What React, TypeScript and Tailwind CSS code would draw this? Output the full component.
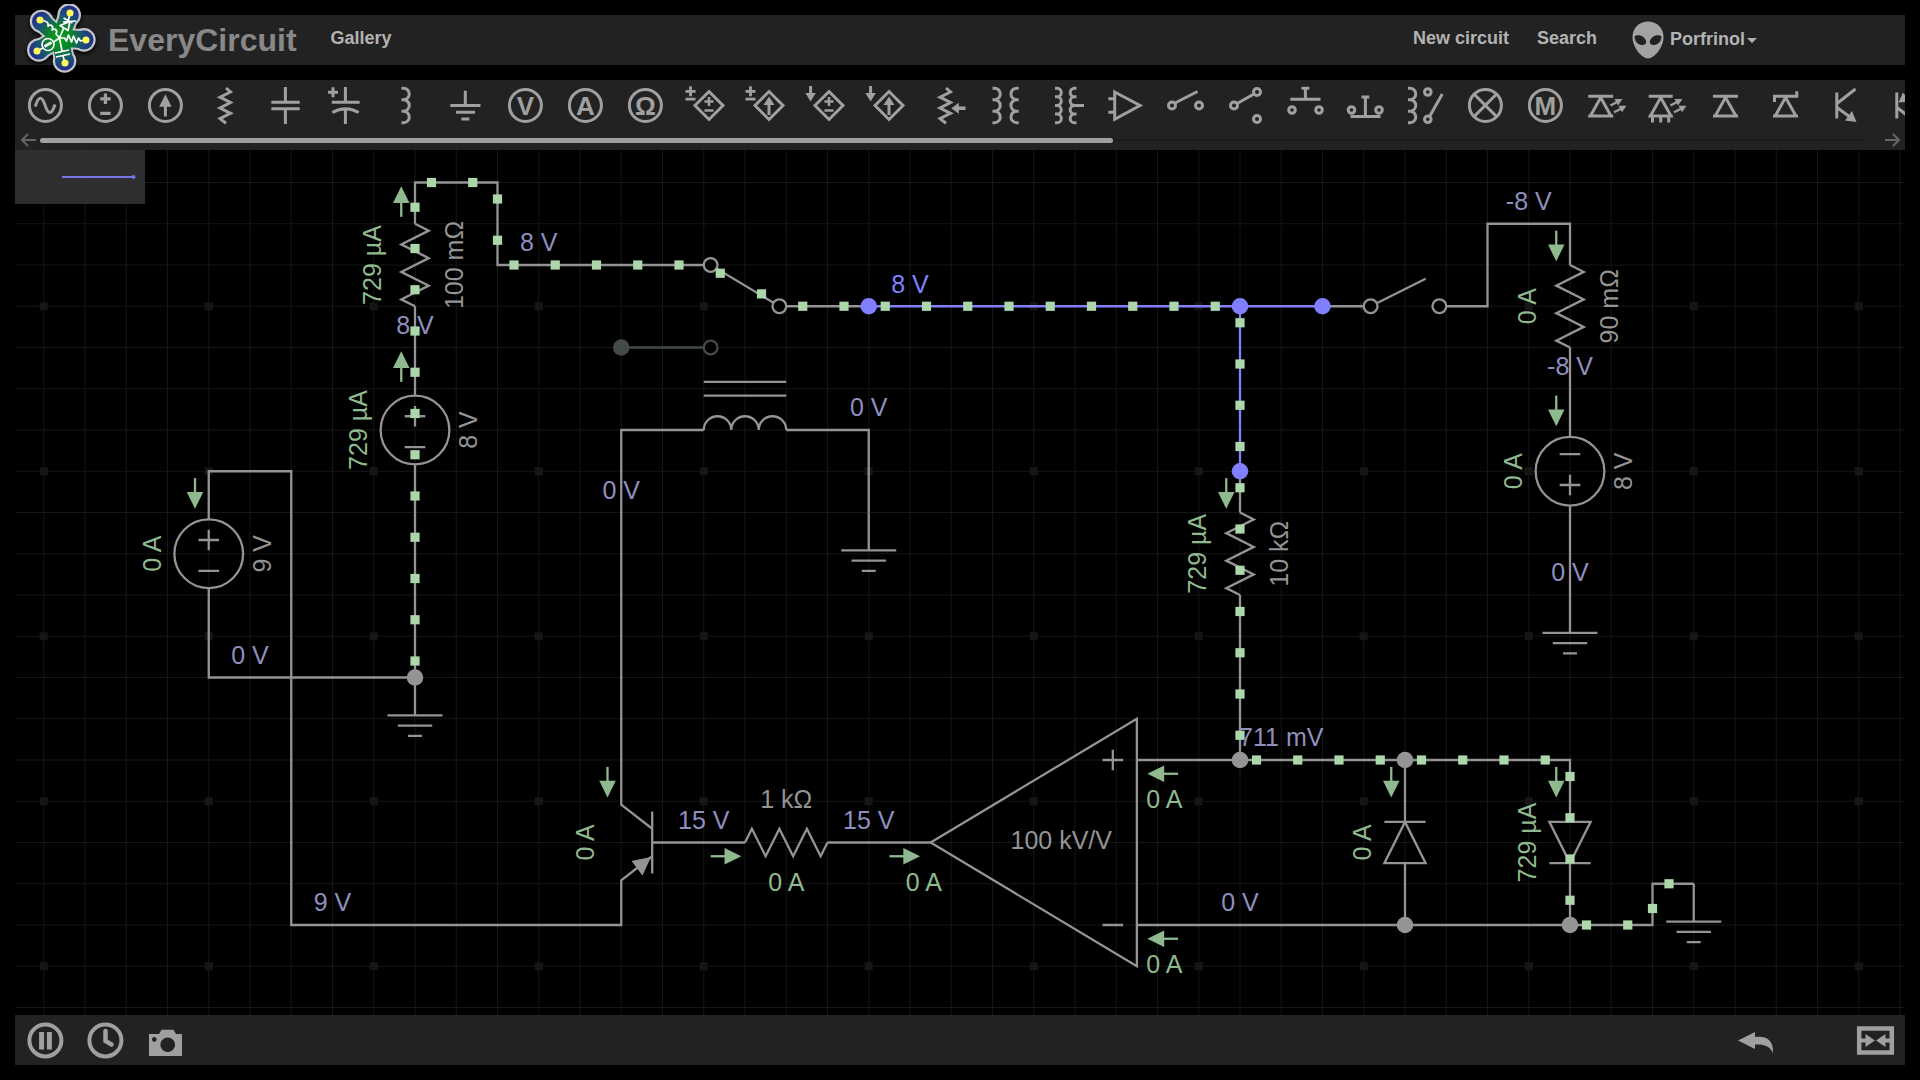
import React from "react";
import type { ReactNode } from "react";

/* ---------- Schematic canvas ---------- */

const U = 41.25; // grid pitch
const X = (i: number) => 28.75 + U * i;
const Y = (j: number) => 32.5 + U * j;
const T = 1 / 3;
const S = 1 / 6;

const GRAY = "#949494";
const GREEN = "#8fb98f";
const VOLT = "#8f8fbf";
const BLUE = "#8080ff";
const DIM = "#434a4a";
const LINE = 2.3;

type Pt = [number, number];

const range = (n: number, from = 0) => Array.from({ length: n }, (_, k) => from + k);

function Wire({ pts, color = GRAY }: { pts: Pt[]; color?: string }) {
  return (
    <polyline
      points={pts.map(([i, j]) => `${X(i)},${Y(j)}`).join(" ")}
      fill="none"
      stroke={color}
      strokeWidth={LINE}
    />
  );
}

function Dot({ i, j, color = GRAY }: { i: number; j: number; color?: string }) {
  return <circle cx={X(i)} cy={Y(j)} r={8.3} fill={color} />;
}

function Terminal({ i, j, color = GRAY }: { i: number; j: number; color?: string }) {
  return <circle cx={X(i)} cy={Y(j)} r={U / 6} fill="black" stroke={color} strokeWidth={LINE} />;
}

function Resistor({ i, j, horizontal = false }: { i: number; j: number; horizontal?: boolean }) {
  const pts = ["0,0", ...range(6).map((k) => `${U * (S + k * T)},${k % 2 ? U / 3 : -U / 3}`), `${2 * U},0`];
  return (
    <polyline
      points={pts.join(" ")}
      transform={`translate(${X(i)} ${Y(j)}) rotate(${horizontal ? 0 : 90})`}
      fill="none"
      stroke={GRAY}
      strokeWidth={LINE}
    />
  );
}

function Source({ i, j, flip = false }: { i: number; j: number; flip?: boolean }) {
  const d = flip ? -1 : 1;
  const plus = (-U / 3) * d;
  const minus = ((U * 5) / 12) * d;
  return (
    <g transform={`translate(${X(i)} ${Y(j)})`} fill="none" stroke={GRAY} strokeWidth={LINE}>
      <circle r={(U * 5) / 6} />
      <path d={`M-10.3 ${plus}h20.6M0 ${plus - 10.3}v20.6M-10.3 ${minus}h20.6`} />
    </g>
  );
}

function Ground({ i, j }: { i: number; j: number }) {
  return (
    <path
      transform={`translate(${X(i)} ${Y(j)})`}
      d="M0 0V37.8M-27.5 37.8h55M-17.2 48.1h34.4M-7 58.4h14"
      stroke={GRAY}
      strokeWidth={LINE}
      fill="none"
    />
  );
}

function Flow({ i, j, angle }: { i: number; j: number; angle: number }) {
  return (
    <g transform={`translate(${X(i)} ${Y(j)}) rotate(${angle})`}>
      <path d="M6.9 0H22" stroke={GREEN} strokeWidth={LINE} />
      <path d="M20.8 -8.25L37.6 0L20.8 8.25z" fill={GREEN} />
    </g>
  );
}

function Label({ i, j, color, up = false, children }: { i: number; j: number; color: string; up?: boolean; children: ReactNode }) {
  return (
    <text
      transform={`translate(${X(i)} ${Y(j)})${up ? " rotate(-90)" : ""}`}
      textAnchor="middle"
      fill={color}
      className="font-['Liberation_Sans',sans-serif] text-[25px]"
    >
      {children}
    </text>
  );
}

const wires: Pt[][] = [
  [[4, 8 + S], [4, 7], [6, 7], [6, 18], [14, 18], [14, 16.917], [14.75, 16 + T]],
  [[4, 9 + 5 * S], [4, 12], [9, 12]],
  [[9, 6 + 5 * S], [9, 12]],
  [[9, 3], [9, 5 + S]],
  [[9, 1], [9, 0], [11, 0], [11, 2], [16, 2]],
  [[16 + S, 2], [17 + 5 * S, 3]],
  [[18, 3], [20, 3]],
  [[16, 6], [14, 6], [14, 15.083], [14.75, 15 + 2 * T]],
  [[18, 6], [20, 6], [20, 8]],
  [[16, 5 - S], [18, 5 - S]],
  [[16, 5 + S], [18, 5 + S]],
  [[31, 3], [32, 3]],
  [[32 + S, 3], [33.5, 2 + T]],
  [[34, 3], [35, 3], [35, 1], [37, 1], [37, 2]],
  [[37, 4], [37, 6 + S]],
  [[37, 7 + 5 * S], [37, 10]],
  [[29, 7], [29, 8]],
  [[29, 10], [29, 14]],
  [[26.5, 14], [37, 14], [37, 15.5]],
  [[33, 14], [33, 15.5]],
  [[33, 16.5], [33, 18]],
  [[37, 16.5], [37, 18]],
  [[26.5, 18], [39, 18], [39, 17], [40, 17]],
  [[14.75, 15.25], [14.75, 16.75]],
  [[14.75, 16], [17, 16]],
  [[19, 16], [21.5, 16]],
  [[32.5, 15.5], [33.5, 15.5]],
  [[36.5, 16.5], [37.5, 16.5]],
];

const charges: Pt[] = [
  ...range(12).map((k): Pt => [9, k + 0.6]),
  [9.4, 0], [10.4, 0], [11, 0.4], [11, 1.4],
  ...range(5, 11).map((k): Pt => [k + 0.4, 2]),
  [16.4, 2.2], [17.4, 2.7],
  ...range(11, 18).map((k): Pt => [k + 0.4, 3]),
  ...range(11, 3).map((k): Pt => [29, k + 0.4]),
  ...range(8, 29).map((k): Pt => [k + 0.4, 14]),
  ...range(4, 14).map((k): Pt => [37, k + 0.4]),
  [37.4, 18], [38.4, 18], [39, 17.6], [39.4, 17],
];

const flows: [number, number, number][] = [
  [4 - T, 7, 90], [9 - T, 1, -90], [9 - T, 5, -90], [14 - T, 14, 90],
  [29 - T, 7, 90], [37 - T, 1, 90], [37 - T, 5, 90], [33 - T, 14, 90], [37 - T, 14, 90],
  [16, 16 + T, 0], [20 + T, 16 + T, 0],
  [27 + 2 * T, 14 + T, 180], [27 + 2 * T, 18 + T, 180],
];

const volts: [number, number, string][] = [
  [12, 1, "8 V"], [9, 3, "8 V"], [36, 0, "-8 V"], [37, 4, "-8 V"], [20, 5, "0 V"],
  [14, 7, "0 V"], [5, 11, "0 V"], [7, 17, "9 V"], [16, 15, "15 V"], [20, 15, "15 V"],
  [30, 13, "711 mV"], [29, 17, "0 V"], [37, 9, "0 V"],
];

const sideLabels: [number, number, string, string][] = [
  [8 + S, 2, "729 µA", GREEN], [10 + S, 2, "100 mΩ", GRAY],
  [8 - S, 6, "729 µA", GREEN], [10.5, 6, "8 V", GRAY],
  [3 - S, 9, "0 A", GREEN], [5.5, 9, "9 V", GRAY],
  [28 + S, 9, "729 µA", GREEN], [30 + S, 9, "10 kΩ", GRAY],
  [36 + S, 3, "0 A", GREEN], [38 + S, 3, "90 mΩ", GRAY],
  [36 - S, 7, "0 A", GREEN], [38.5, 7, "8 V", GRAY],
  [32 + S, 16, "0 A", GREEN], [36 + S, 16, "729 µA", GREEN], [13 + T, 16, "0 A", GREEN],
];

function Schematic() {
  return (
    <svg className="absolute inset-0 h-full w-full" role="img" aria-label="Circuit schematic">
      <g stroke="#161616" strokeWidth={1}>
        {range(64).map((i) => (
          <line key={`v${i}`} x1={X(i)} x2={X(i)} y1="0" y2="100%" />
        ))}
        {range(40).map((j) => (
          <line key={`h${j}`} x1="0" x2="100%" y1={Y(j)} y2={Y(j)} />
        ))}
      </g>
      <g fill="#161616">
        {range(16).flatMap((a) =>
          range(10).map((b) => <rect key={`${a}-${b}`} x={X(a * 4) - 4} y={Y(b * 4 + 3) - 4} width={8} height={8} />),
        )}
      </g>

      {wires.map((pts, k) => (
        <Wire key={k} pts={pts} />
      ))}
      <Wire pts={[[14, 4], [16 + S, 4]]} color={DIM} />
      <Dot i={14} j={4} color={DIM} />
      <Terminal i={16 + S} j={4} color={DIM} />
      <Wire pts={[[20, 3], [31, 3]]} color={BLUE} />
      <Wire pts={[[29, 3], [29, 7]]} color={BLUE} />

      <Terminal i={16 + S} j={2} />
      <Terminal i={18 - S} j={3} />
      <Terminal i={32 + S} j={3} />
      <Terminal i={34 - S} j={3} />

      <Resistor i={9} j={1} />
      <Resistor i={29} j={8} />
      <Resistor i={37} j={2} />
      <Resistor i={17} j={16} horizontal />
      <Source i={4} j={9} />
      <Source i={9} j={6} />
      <Source i={37} j={7} flip />
      <Ground i={9} j={12} />
      <Ground i={20} j={8} />
      <Ground i={37} j={10} />
      <Ground i={40} j={17} />

      {/* inductor */}
      <path
        d={`M${X(16)} ${Y(6)}${"a13.75 13.75 0 0 1 27.5 0".repeat(3)}`}
        fill="none"
        stroke={GRAY}
        strokeWidth={LINE}
      />
      {/* diodes */}
      <path
        d={`M${X(33)} ${Y(15.5)}L${X(33.5)} ${Y(16.5)}H${X(32.5)}zM${X(37)} ${Y(16.5)}L${X(37.5)} ${Y(15.5)}H${X(36.5)}z`}
        fill="none"
        stroke={GRAY}
        strokeWidth={LINE}
      />
      {/* op amp */}
      <path
        d={`M${X(21.5)} ${Y(16)}L${X(26.5)} ${Y(13)}V${Y(19)}zM${X(25.917) - 10.3} ${Y(14)}h20.6M${X(25.917)} ${Y(14) - 10.3}v20.6M${X(25.917) - 10.3} ${Y(18)}h20.6`}
        fill="none"
        stroke={GRAY}
        strokeWidth={LINE}
      />
      {/* emitter arrow */}
      <path d="M636 707L616.5 711L627.5 725.5z" fill={GRAY} />

      {[[9, 12], [29, 14], [33, 14], [33, 18], [37, 18]].map(([i, j]) => (
        <Dot key={`${i}-${j}`} i={i} j={j} />
      ))}
      {[[20, 3], [29, 3], [31, 3], [29, 7]].map(([i, j]) => (
        <Dot key={`${i}-${j}`} i={i} j={j} color={BLUE} />
      ))}

      {flows.map(([i, j, a], k) => (
        <Flow key={k} i={i} j={j} angle={a} />
      ))}
      {volts.map(([i, j, t], k) => (
        <Label key={k} i={i} j={j + 2 * T} color={VOLT}>{t}</Label>
      ))}
      <Label i={21} j={2 + 2 * T} color={BLUE}>8 V</Label>
      {sideLabels.map(([i, j, t, c], k) => (
        <Label key={k} i={i} j={j} color={c} up>{t}</Label>
      ))}
      <Label i={18} j={15 + S} color={GRAY}>1 kΩ</Label>
      <Label i={24 + 2 * T} j={16 + S} color={GRAY}>100 kV/V</Label>
      <Label i={18} j={17 + S} color={GREEN}>0 A</Label>
      <Label i={21 + T} j={17 + S} color={GREEN}>0 A</Label>
      <Label i={27 + S} j={15 + S} color={GREEN}>0 A</Label>
      <Label i={27 + S} j={19 + S} color={GREEN}>0 A</Label>

      <g fill="#abd7ab">
        {charges.map(([i, j], k) => (
          <rect key={k} x={X(i) - 4.6} y={Y(j) - 4.6} width={9.2} height={9.2} />
        ))}
      </g>
    </svg>
  );
}

/* ---------- Component palette ---------- */

const Ring = () => <circle cx="30.4" cy="25.4" r="16" />;
const Letter = ({ children }: { children: string }) => (
  <text x="30.4" y="34.5" textAnchor="middle" stroke="none" fill="currentColor" className="font-['Liberation_Sans',sans-serif] text-[26px] font-bold">
    {children}
  </text>
);
const Fill = ({ d }: { d: string }) => <path d={d} fill="currentColor" stroke="none" />;
const coil = (x: number, n: number, dir: 1 | -1) => {
  const h = 34.5 / n;
  const r = h / 2;
  return `M${x} 8.2${`h${dir * 2}a${r} ${r} 0 0 ${dir === 1 ? 1 : 0} 0 ${h}h${-dir * 2}`.repeat(n)}`;
};
const zigzag = "M31 8L35.5 12L25 17.2L35.5 22.5L25 28L35.5 33.3L25 38.6L31 43.2";
const Diamond = () => <path d="M34 11.5L48 25.5L34 39.5L20 25.5z" strokeLinejoin="miter" />;
const InnerPM = () => <path d="M29.5 21.5h9M34 17v9M29.5 30.5h9" strokeWidth="2.6" />;
const InnerArrow = () => (
  <>
    <path d="M34 24v11" />
    <Fill d="M34 16.5l5.5 8.5h-11z" />
  </>
);
const CornerPM = () => <path d="M10.5 11.3h10M15.5 6.3v10M10.5 19.2h10" strokeWidth="2.8" />;
const CornerArrow = () => (
  <>
    <path d="M15.6 6v9" />
    <Fill d="M15.6 21.5l-5.2-8.5h10.4z" />
  </>
);
const Rays = () => (
  <>
    <path d="M35.5 25.5L42 22M39 32.3L46 28.8" strokeWidth="2.4" />
    <Fill d="M47.500 19l-4.500 6.500-3.500-6.500zM51.500 25.800l-4.500 6.500-3.500-6.500z" />
  </>
);

const palette: [string, ReactNode][] = [
  ["AC voltage source", <><Ring /><path d="M20.3 26.5C23.5 15.5 27 16 30 25C33 34.5 36.5 35.5 40 24.5" /></>],
  ["Voltage source", <><Ring /><path d="M25.2 18.8h10.4M30.4 13.6v10.4M25.2 33.4h10.4" strokeWidth="3.2" /></>],
  ["Current source", <><Ring /><path d="M30.4 25v11.5" /><Fill d="M30.4 14.3l6.2 12.5h-12.4z" /></>],
  ["Resistor", <path d={zigzag} />],
  ["Capacitor", <path d="M30.4 7v15.3M16.3 22.3h28.4M16.3 28.7h28.4M30.4 28.7v15.3" />],
  ["Polarized capacitor", <path d="M30.4 7v15.3M16.8 22.3h27.8M17.3 32.5Q30.5 25 43.7 32.5M30.4 29v15M13 12.3h10M18 7.3v10" />],
  ["Inductor", <path d={coil(26.5, 3, 1)} />],
  ["Ground", <path d="M30.3 10.7v14.7M15.3 25.4h30.2M21 32.3h19M26.3 39h8" />],
  ["Voltmeter", <><Ring /><Letter>V</Letter></>],
  ["Ammeter", <><Ring /><Letter>A</Letter></>],
  ["Ohmmeter", <><Ring /><Letter>Ω</Letter></>],
  ["Voltage controlled voltage source", <><Diamond /><InnerPM /><CornerPM /></>],
  ["Voltage controlled current source", <><Diamond /><InnerArrow /><CornerPM /></>],
  ["Current controlled voltage source", <><Diamond /><InnerPM /><CornerArrow /></>],
  ["Current controlled current source", <><Diamond /><InnerArrow /><CornerArrow /></>],
  ["Potentiometer", <><path d={zigzag} /><path d="M41 28.2h9.5" strokeWidth="3.6" /><Fill d="M36.3 28.2l7.5-5.5v11z" /></>],
  ["Transformer", <path d={coil(17.5, 3, 1) + coil(43.7, 3, -1)} />],
  ["Tapped transformer", <path d={coil(20, 4, 1) + coil(41.5, 4, -1) + "M38 25.5h11"} />],
  ["Operational amplifier", <path d="M19.7 12L45 25.5L19.7 39.2zM13.3 18.7h6.4M13.3 32.3h6.4" />],
  ["Switch", <><circle cx="17" cy="25.5" r="3.5" /><circle cx="44" cy="25.5" r="3.5" /><path d="M20 23L42.5 11.5" /></>],
  ["Two-way switch", <><circle cx="19" cy="25.5" r="3.5" /><circle cx="42" cy="12" r="3.5" /><circle cx="42" cy="39" r="3.5" /><path d="M22 23.5L39 14" /></>],
  ["Push button", <><circle cx="17" cy="30" r="3.3" /><circle cx="44" cy="30" r="3.3" /><path d="M26.5 8.3h7.8M30.4 8.3v11M15.3 19.3h30.2" /></>],
  ["Normally closed button", <><circle cx="16.5" cy="30" r="3.3" /><circle cx="44" cy="30" r="3.3" /><path d="M26.500 17h7.8M30.4 17v19.5M15.5 36.4h30" /></>],
  ["Relay", <><path d={coil(13, 3, 1)} /><circle cx="32.8" cy="12" r="3.3" /><circle cx="32.8" cy="39.3" r="3.3" /><path d="M34.8 36L47.3 14" /></>],
  ["Lamp", <><Ring /><path d="M19 14l22.6 22.6M41.6 14L19 36.6" /></>],
  ["Motor", <><Ring /><Letter>M</Letter></>],
  ["LED", <><path d="M13.2 16.2h25M25.7 17.5L36 36H15.4zM13.2 36h25" /><Rays /></>],
  ["RGB LED", <><path d="M13.7 16.2h24M25.7 17.5L36 36H15.4zM13.7 36h24M17.5 36v6.5M25.7 36v6.5M33.7 36v6.5" /><Rays /></>],
  ["Diode", <path d="M18 16.2h25M30.5 17.5L41 36H20.2zM18 36h25" />],
  ["Zener diode", <path d="M19.5 22v-5.8h22.3v-5M30.5 17.5L41 36H20.2zM18 36h25" />],
  ["NPN transistor", <><path d="M21.8 12.5v26M22 23.5L40.5 9M22 27.500L35 37" /><Fill d="M41.5 42l-11.500-1.5 7-9.500z" /></>],
  ["PNP transistor", <><path d="M21.8 12.5v26M30 17.5L40.5 9M22 27.5L40.5 42" /><Fill d="M23.5 22.5l4.5-10 7 9z" /></>],
];

function ToolButton({ label, children }: { label: string; children: ReactNode }) {
  return (
    <button type="button" aria-label={label} className="h-[50px] w-[60px] shrink-0 text-[#a0a0a0]">
      <svg viewBox="0 0 60 50" className="h-full w-full" fill="none" stroke="currentColor" strokeWidth="3">
        {children}
      </svg>
    </button>
  );
}

function ScrollArrow({ right = false }: { right?: boolean }) {
  return (
    <button type="button" aria-label={right ? "Scroll right" : "Scroll left"} className="flex h-5 w-[25px] items-center justify-center text-[#666]">
      <svg viewBox="0 0 16 14" className="h-[14px] w-4" fill="none" stroke="currentColor" strokeWidth="2">
        {right ? <path d="M0 7h14M8 1l6 6-6 6" /> : <path d="M16 7H2M8 1L2 7l6 6" />}
      </svg>
    </button>
  );
}

/* ---------- Header ---------- */

const tips: Pt[] = [[16, 19], [46, 12], [62, 39], [41, 62], [13, 50]];

function Logo() {
  return (
    <svg viewBox="0 3 74 76" className="-mt-3 -mb-4 h-[76px] w-[74px] drop-shadow-[0_2px_2px_#000]" role="img" aria-label="EveryCircuit logo">
      <defs>
        <radialGradient id="logo-fill" gradientUnits="userSpaceOnUse" cx="36" cy="37" r="33">
          <stop offset="0" stopColor="#04a512" />
          <stop offset=".4" stopColor="#0b8030" />
          <stop offset=".7" stopColor="#1c4f78" />
          <stop offset="1" stopColor="#20308c" />
        </radialGradient>
      </defs>
      {[
        { c: "#c4c4c8", w: 21, r: 11.8, k: 16 },
        { c: "url(#logo-fill)", w: 17, r: 9.6, k: 14 },
      ].map(({ c, w, r, k }) => (
        <g key={c} stroke={c} fill={c}>
          <circle cx="36" cy="37" r={k} stroke="none" />
          {tips.map(([x, y]) => {
            const hx = 36 + (x - 36) * 0.92;
            const hy = 37 + (y - 37) * 0.92;
            return (
              <g key={x}>
                <path d={`M36 37L${hx} ${hy}`} strokeWidth={w} />
                <circle cx={hx} cy={hy} r={r} stroke="none" />
              </g>
            );
          })}
        </g>
      ))}
      <g stroke="#fff" strokeWidth="1.7" fill="none" strokeLinejoin="round">
        <path d="M35.5 37L32 33c2-4-1-6-4-4c2-4-1-6-4-4c1-4-2-5-8-6" />
        <path d="M35.5 37l4-9.5M36 24.5l8 5 2-9zM39.500 17l9 5M44 20.500l2-8M39 21l13-1" />
        <path d="M35.5 37h5l2 3 2-6 3 7 2-6 3 7 2-5 2 3 4-1" />
        <path d="M35.5 37l2.500 13M31 52l14-3M32 56l14-3M39 55l2 7" />
        <path d="M35.5 37l-6 4M19 47l-6 3" />
        <circle cx="24" cy="43.5" r="6" />
        <path d="M20.5 45.5l7-4" strokeWidth="2.8" />
      </g>
      <g fill="#fdf95a">
        {tips.map(([x, y]) => (
          <circle key={x} cx={x} cy={y} r="3.5" />
        ))}
      </g>
    </svg>
  );
}

function Header() {
  return (
    <header className="flex h-[50px] items-center bg-[#222] text-lg font-bold text-[#b3b3b3]">
      <a href="#home" className="relative z-10 ml-[9px] flex items-center">
        <Logo />
        <span className="ml-[10px] text-[32px] leading-[50px] text-[#888]">EveryCircuit</span>
      </a>
      <nav className="flex flex-1 items-center">
        <a href="#gallery" className="-mt-1 ml-[34px]">Gallery</a>
        <a href="#new" className="-mt-1 ml-auto">New circuit</a>
        <a href="#search" className="-mt-1 ml-[28px]">Search</a>
        <button type="button" className="mr-[148px] ml-[35px] flex items-center" aria-haspopup="menu">
          <svg viewBox="0 0 32 38" className="h-[38px] w-8" aria-hidden="true">
            <path d="M16 .5C25 .5 31.5 7 31.5 16C31.5 26 22.5 37.5 16 37.5S.5 26 .5 16C.5 7 7 .5 16 .5z" fill="#a3a3a3" />
            <path d="M2.5 15.5C6 12.5 14 15 14.2 21.5C14 25.5 3 25.5 2.5 15.5zM29.5 15.5C26 12.5 18 15 17.8 21.5C18 25.5 29 25.5 29.5 15.5z" fill="#222" />
          </svg>
          <span className="-mt-[2px] ml-[6px]">Porfrinol</span>
          <svg viewBox="0 0 10 5" className="ml-[2px] h-[5px] w-[10px]" aria-hidden="true">
            <path d="M0 0h10L5 5z" fill="#b3b3b3" />
          </svg>
        </button>
      </nav>
    </header>
  );
}

export default function App() {
  return (
    <div className="flex min-h-screen flex-col bg-black p-[15px] font-['Liberation_Sans',Arial,sans-serif]">
      <Header />
      <section aria-label="Components" className="mt-[15px] bg-[#222]">
        <div className="flex overflow-hidden">
          {palette.map(([label, icon]) => (
            <ToolButton key={label} label={label}>{icon}</ToolButton>
          ))}
        </div>
        <div className="flex h-5 items-center">
          <ScrollArrow />
          <div className="flex h-[2px] flex-1 items-center bg-[#1a1a1a]">
            <div className="h-[5px] w-10/17 rounded-full bg-[#a0a0a0]" />
          </div>
          <div className="w-4" />
          <ScrollArrow right />
        </div>
      </section>

      <main className="relative flex-1 overflow-hidden">
        <Schematic />
        <div className="absolute top-0 left-0 h-[54px] w-[130px] bg-[#333333]/90">
          <svg viewBox="0 0 130 54" className="h-full w-full" role="img" aria-label="Selected part">
            <path d="M47 27h71" stroke="#7676ea" strokeWidth="2" />
            <circle cx="118.5" cy="27" r="2" fill="#7676ea" />
          </svg>
        </div>
      </main>

      <footer className="flex h-[50px] items-center bg-[#222]">
        <ToolButton label="Pause">
          <circle cx="30.4" cy="25.4" r="16" strokeWidth="4" />
          <path d="M26.6 17v17.5M34.4 17v17.5" strokeWidth="5" />
        </ToolButton>
        <ToolButton label="Simulation time">
          <circle cx="30.4" cy="25.4" r="16" strokeWidth="4" />
          <path d="M30.5 16v10l6 3.5" strokeWidth="4.5" strokeLinecap="round" />
        </ToolButton>
        <ToolButton label="Take snapshot">
          <path
            fill="currentColor"
            stroke="none"
            fillRule="evenodd"
            d="M14 19h10l2.5-4.3h12l2.5 4.3h6v22H14zM32.7 22.4a7.3 7.3 0 1 0 .01 0zM19.3 22a2.4 2.4 0 1 0 .01 0z"
          />
        </ToolButton>
        <div className="flex-1" />
        <ToolButton label="Undo">
          <Fill d="M13 25.5L30 17v5C42 21 48.5 25 48 38C45 31.5 40 29 30 29.5v4.5z" />
        </ToolButton>
        <div className="w-[60px]" />
        <ToolButton label="Zoom to fit">
          <path d="M14.2 13.5h32.6v24H14.2z" strokeWidth="4.5" />
          <path d="M15 25.5h8M38 25.5h8" strokeWidth="4" />
          <Fill d="M20.5 19l9.5 6.5-9.5 6.5zM40.5 19L31 25.5l9.5 6.5z" />
        </ToolButton>
      </footer>
    </div>
  );
}
